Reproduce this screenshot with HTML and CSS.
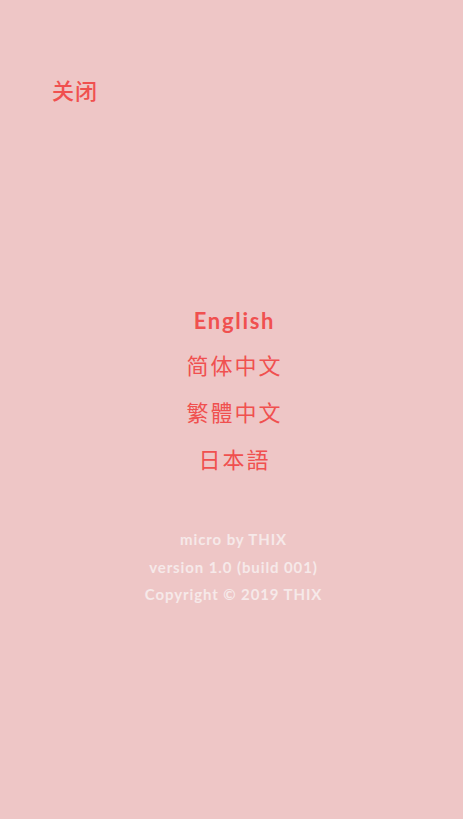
FILE: index.html
```html
<!DOCTYPE html>
<html lang="zh">
<head>
<meta charset="utf-8">
<link rel="stylesheet" href="styles.css">
</head>
<body>
<div class="page">
  <header class="top">
    <span class="close">关闭</span>
  </header>
  <nav class="langs">
    <div class="lang active">English</div>
    <div class="lang">简体中文</div>
    <div class="lang">繁體中文</div>
    <div class="lang">日本語</div>
  </nav>
  <footer class="info">
    <div>micro by THIX</div>
    <div>version 1.0 (build 001)</div>
    <div>Copyright © 2019 THIX</div>
  </footer>
</div>
</body>
</html>
```

FILE: styles.css
```css
html, body {
  margin: 0;
  padding: 0;
  background: #eec6c6;
}
body {
  width: 463px;
  height: 819px;
  overflow: hidden;
  font-family: "Lato", "Noto Sans CJK SC", sans-serif;
}
.page {
  display: flex;
  flex-direction: column;
}
.top {
  padding: 75px 0 0 52px;
  height: 28px;
}
.close {
  color: #f0504f;
  font-size: 22px;
  font-weight: 500;
  line-height: 28px;
  letter-spacing: 1px;
  font-family: "Noto Sans CJK SC", sans-serif;
}
.langs {
  margin-top: 194px;
  padding-left: 6px;
  display: flex;
  flex-direction: column;
  align-items: center;
  color: #f0504f;
}
.lang {
  height: 47px;
  line-height: 47px;
  font-size: 22px;
  letter-spacing: 2px;
  font-family: "Noto Sans CJK SC", sans-serif;
}
.lang.active {
  height: 44px;
  font-family: "Lato", sans-serif;
  font-weight: 700;
  letter-spacing: 1.7px;
}
.info {
  margin-top: 44px;
  padding-left: 4px;
  display: flex;
  flex-direction: column;
  align-items: center;
  color: #f6e9e9;
  font-size: 15px;
  font-weight: 700;
  line-height: 27.5px;
  letter-spacing: 0.9px;
}
```
